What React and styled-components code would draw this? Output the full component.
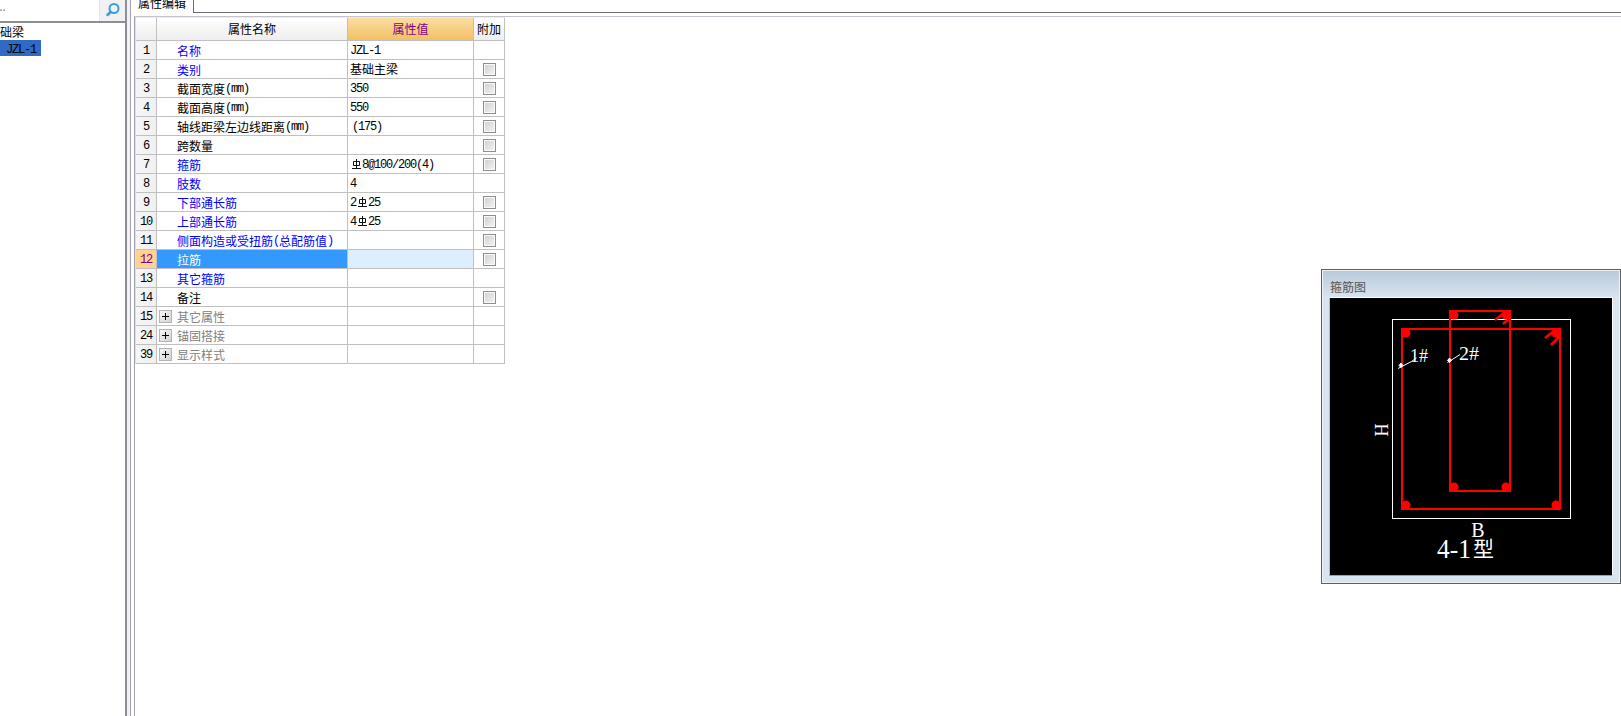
import React from "react";
import styled, { createGlobalStyle } from "styled-components";

const Global = createGlobalStyle`
  html, body { margin: 0; padding: 0; height: 100%; background: #fff; overflow: hidden; }
  #root { height: 100%; }
`;

const CJK = `"Noto Sans CJK SC", "Liberation Sans", sans-serif`;
const LINE = "#c0c0c0";

const Page = styled.div`
  position: relative;
  display: flex;
  width: 1621px;
  height: 716px;
  overflow: hidden;
  background: #fff;
  font-family: ${CJK};
  font-size: 12px;
  color: #000;
`;

const LeftPanel = styled.aside`
  width: 125px;
  flex: none;
  display: flex;
  flex-direction: column;
  overflow: hidden;
`;
const SearchBar = styled.div`
  height: 21px;
  flex: none;
  display: flex;
  background: #f1f1f1;
  border-bottom: 2px solid #8e8e96;
  box-sizing: content-box;
`;
const SearchInput = styled.div`
  width: 100px;
  flex: none;
  box-sizing: border-box;
  padding-left: 0;
  text-indent: -2px;
  background: #fff;
  border-right: 1px solid #e4e4e4;
  color: #8060a0;
  font: 10px/17px "Liberation Mono", monospace;
  letter-spacing: -3px;
  overflow: hidden;
`;
const SearchButton = styled.div`
  flex: 1;
  display: flex;
  padding: 2px 0 0 5px;
`;
const Tree = styled.div`
  display: flex;
  flex-direction: column;
  align-items: flex-start;
`;
const TreeGroup = styled.div`
  height: 17px;
  line-height: 18px;
  font-size: 12px;
`;
const TreeNode = styled.div`
  width: 41px;
  height: 16px;
  line-height: 16px;
  box-sizing: border-box;
  padding-left: 6px;
  background: #316ac5;
  color: #000;
`;

const Splitter = styled.div`
  width: 6px;
  flex: none;
  box-sizing: border-box;
  border-left: 2px solid #8e8e96;
  border-right: 1px solid #a2a2b2;
  background: #f2f2f2;
`;

const Content = styled.main`
  flex: 1;
  display: flex;
  flex-direction: column;
  min-width: 0;
`;
const TabStrip = styled.div`
  height: 13px;
  flex: none;
  display: flex;
`;
const Tab = styled.div`
  width: 63px;
  height: 13px;
  flex: none;
  box-sizing: border-box;
  border-right: 1px solid #6e6e78;
  padding-left: 7px;
  line-height: 12px;
  overflow: hidden;
  white-space: nowrap;
  & > span { display: block; margin-top: -3px; }
`;
const TabRest = styled.div`
  flex: 1;
  border-bottom: 1px solid #6e6e78;
`;
const Sheet = styled.div`
  flex: 1;
  margin: 3px 0 0 3px;
  border-top: 1px solid #c4c4cc;
  border-left: 1px solid #a2a2b2;
`;

const Table = styled.table`
  table-layout: fixed;
  width: 370px;
  border-collapse: separate;
  border-spacing: 0;
  border-top: 1px solid #ececec;
  border-left: 1px solid #e0e0e0;
`;
const HeadCell = styled.th`
  height: 23px;
  box-sizing: border-box;
  padding: 0;
  font-weight: 400;
  font-size: 12px;
  line-height: 20px;
  text-align: center;
  color: ${p => (p.$active ? "#800080" : "#000")};
  border-right: 1px solid ${LINE};
  border-bottom: 1px solid ${LINE};
  background: ${p =>
    p.$active
      ? "linear-gradient(#fbdda2, #f3c063)"
      : "linear-gradient(#ffffff, #eeeeee)"};
`;
const NumCell = styled.td`
  height: 19px;
  box-sizing: border-box;
  padding: 2px 0 0;
  text-align: center;
  font: 12px/16px "Liberation Mono", monospace;
  letter-spacing: -1.2px;
  color: ${p => (p.$selected ? "#800080" : "#000")};
  border-right: 1px solid ${LINE};
  border-bottom: 1px solid ${LINE};
  background: ${p =>
    p.$selected ? "#ffd28f" : "linear-gradient(90deg, #f6f6f6, #f0f0f0)"};
`;
const NameCell = styled.td`
  height: 19px;
  box-sizing: border-box;
  padding: 0;
  border-right: 1px solid ${LINE};
  border-bottom: 1px solid ${LINE};
  background: ${p => (p.$selected ? "#3399ff" : "#fff")};
  color: ${p =>
    p.$selected ? "#fff" : p.$tone === "blue" ? "#0000ff" : p.$tone === "gray" ? "#808080" : "#000"};
`;
const NameInner = styled.div`
  display: flex;
  align-items: center;
  height: 18px;
  padding-left: ${p => (p.$group ? "2px" : "20px")};
  line-height: 19px;
  white-space: nowrap;
  overflow: hidden;
`;
const ValueCell = styled.td`
  height: 19px;
  box-sizing: border-box;
  padding: 0;
  border-right: 1px solid ${LINE};
  border-bottom: 1px solid ${LINE};
  background: ${p => (p.$selected ? "#ddeeff" : "#fff")};
`;
const ValueInner = styled.div`
  display: flex;
  align-items: center;
  height: 18px;
  padding-left: ${p => (p.$indent ? "4px" : "2px")};
  line-height: 18px;
  white-space: nowrap;
`;
const ExtraCell = styled.td`
  height: 19px;
  box-sizing: border-box;
  padding: 0;
  border-right: 1px solid ${LINE};
  border-bottom: 1px solid ${LINE};
`;
const Check = styled.div`
  width: 13px;
  height: 13px;
  box-sizing: border-box;
  margin: 1px 0 0 9px;
  border: 1px solid #8e8e8e;
  background: linear-gradient(135deg, #cfcfcf, #f4f4f4);
  box-shadow: inset 0 0 0 1px #fafafa;
`;
const Expander = styled.div`
  position: relative;
  width: 13px;
  height: 13px;
  flex: none;
  box-sizing: border-box;
  margin-right: 5px;
  border: 1px solid #b4b4b4;
  background: linear-gradient(135deg, #f6f6f6, #d4d4d4);
  &::before, &::after {
    content: "";
    position: absolute;
    background: #000;
  }
  &::before { left: 2px; top: 5px; width: 7px; height: 1px; }
  &::after { left: 5px; top: 2px; width: 1px; height: 7px; }
`;
const Latin = styled.span`
  font: 12px/18px "Liberation Mono", monospace;
  letter-spacing: -1.2px;
  padding-top: 2px;
`;
const RebarIcon = styled.svg`
  width: 12px;
  height: 12px;
  flex: none;
`;

const Popup = styled.section`
  position: absolute;
  left: 1321px;
  top: 269px;
  width: 300px;
  height: 315px;
  box-sizing: border-box;
  display: flex;
  flex-direction: column;
  padding: 0 8px 7px 7px;
  border: 1px solid #5e5e5e;
  box-shadow: inset 0 0 0 1px #eef2f7;
  background: linear-gradient(#b9c9d9 0, #d8e4f0 28px, #d8e4f0 100%);
`;
const PopupTitle = styled.div`
  height: 27px;
  flex: none;
  box-sizing: border-box;
  padding: 7px 0 0 1px;
  line-height: 20px;
  color: #555;
`;
const Canvas = styled.div`
  width: 282px;
  height: 277px;
  flex: none;
  background: #000;
  border-top: 1px solid #fff;
  border-right: 1px solid #fff;
  border-bottom: 1px solid #a0a0a0;
  border-left: 1px solid #b0b8c4;
  & > svg { display: block; }
`;

const Rebar = () => (
  <RebarIcon viewBox="0 0 12 12" aria-hidden="true">
    <path
      d="M3.500 3.500h6v4h-6zM6.500 1v10M2 10.500h9"
      fill="none"
      stroke="#111"
      strokeWidth="1"
    />
  </RebarIcon>
);

const Mixed = ({ text }) =>
  text.split(/(Φ|[\x00-\x7f]+)/).filter(Boolean).map((part, i) => {
    if (part === "Φ") return <Rebar key={i} />;
    if (/^[\x00-\x7f]+$/.test(part)) return <Latin key={i}>{part}</Latin>;
    return <span key={i}>{part}</span>;
  });

const ROWS = [
  { n: 1, name: "名称", tone: "blue", value: "JZL-1" },
  { n: 2, name: "类别", tone: "blue", value: "基础主梁", check: true },
  { n: 3, name: "截面宽度(mm)", value: "350", check: true },
  { n: 4, name: "截面高度(mm)", value: "550", check: true },
  { n: 5, name: "轴线距梁左边线距离(mm)", value: "(175)", indent: true, check: true },
  { n: 6, name: "跨数量", check: true },
  { n: 7, name: "箍筋", tone: "blue", value: "Φ8@100/200(4)", check: true },
  { n: 8, name: "肢数", tone: "blue", value: "4" },
  { n: 9, name: "下部通长筋", tone: "blue", value: "2Φ25", check: true },
  { n: 10, name: "上部通长筋", tone: "blue", value: "4Φ25", check: true },
  { n: 11, name: "侧面构造或受扭筋(总配筋值)", tone: "blue", check: true },
  { n: 12, name: "拉筋", selected: true, check: true },
  { n: 13, name: "其它箍筋", tone: "blue" },
  { n: 14, name: "备注", check: true },
  { n: 15, name: "其它属性", tone: "gray", group: true },
  { n: 24, name: "锚固搭接", tone: "gray", group: true },
  { n: 39, name: "显示样式", tone: "gray", group: true },
];

const RED = "#ff0000";
const DOTS = [
  [1406, 333], [1556, 333], [1406, 505], [1556, 505],
  [1454, 315], [1506, 315], [1454, 487], [1506, 487],
];

const StirrupDrawing = () => (
  <svg width="282" height="277" viewBox="1330 298 282 277">
    <rect x="1392.5" y="319.5" width="178" height="199" fill="none" stroke="#fff" strokeWidth="1" />
    <g fill="none" stroke={RED} strokeWidth="2">
      <rect x="1402" y="329" width="158" height="180" />
      <rect x="1450" y="311" width="60" height="180" />
      <path d="M1545 338l9-7M1551 345l9-9" strokeWidth="2.500" />
      <path d="M1495 320l9-7M1503 324l7-6" strokeWidth="2.500" />
    </g>
    <g fill={RED}>
      {DOTS.map(([cx, cy]) => (
        <circle key={`${cx}-${cy}`} cx={cx} cy={cy} r="4.500" />
      ))}
    </g>
    <g stroke="#fff" strokeWidth="1" fill="#fff">
      <path d="M1398 368.500l13.500-7 5-3.500" fill="none" />
      <path d="M1401 363l2 2.500-2 2-2-2z" />
      <path d="M1447.500 362.500l12.500-8" fill="none" />
      <path d="M1449.500 358l2 2.500-2 2-2-2z" />
    </g>
    <g fill="#fff" fontFamily='"Liberation Serif", "Noto Sans CJK SC", serif'>
      <text x="1410" y="362" fontSize="19" textLength="18" lengthAdjust="spacingAndGlyphs">1#</text>
      <text x="1459" y="360" fontSize="19" textLength="20" lengthAdjust="spacingAndGlyphs">2#</text>
      <text x="1478" y="536.500" fontSize="20" textAnchor="middle">B</text>
      <text transform="translate(1388 430) rotate(-90)" fontSize="18" textAnchor="middle">H</text>
      <text x="1437" y="558" fontSize="28" textLength="34" lengthAdjust="spacingAndGlyphs">4-1</text>
      <text x="1473" y="556" fontSize="21">型</text>
    </g>
  </svg>
);

export default function App() {
  return (
    <Page>
      <Global />
      <LeftPanel>
        <SearchBar>
          <SearchInput>..</SearchInput>
          <SearchButton>
            <svg width="16" height="16" viewBox="0 0 16 16" aria-hidden="true">
              <circle cx="9" cy="6.500" r="4.500" fill="#eaf6ff" stroke="#3d9bdc" strokeWidth="2" />
              <path d="M5.500 10L2.500 13" stroke="#3d9bdc" strokeWidth="2.500" strokeLinecap="round" />
            </svg>
          </SearchButton>
        </SearchBar>
        <Tree>
          <TreeGroup>础梁</TreeGroup>
          <TreeNode><Latin>JZL-1</Latin></TreeNode>
        </Tree>
      </LeftPanel>
      <Splitter />
      <Content>
        <TabStrip>
          <Tab><span>属性编辑</span></Tab>
          <TabRest />
        </TabStrip>
        <Sheet>
          <Table>
            <colgroup>
              <col style={{ width: 21 }} />
              <col style={{ width: 191 }} />
              <col style={{ width: 126 }} />
              <col style={{ width: 31 }} />
            </colgroup>
            <thead>
              <tr>
                <HeadCell />
                <HeadCell>属性名称</HeadCell>
                <HeadCell $active>属性值</HeadCell>
                <HeadCell>附加</HeadCell>
              </tr>
            </thead>
            <tbody>
              {ROWS.map(r => (
                <tr key={r.n}>
                  <NumCell $selected={r.selected}>{r.n}</NumCell>
                  <NameCell $selected={r.selected} $tone={r.tone}>
                    <NameInner $group={r.group}>
                      {r.group && <Expander />}
                      <Mixed text={r.name} />
                    </NameInner>
                  </NameCell>
                  <ValueCell $selected={r.selected}>
                    <ValueInner $indent={r.indent}>
                      {r.value && <Mixed text={r.value} />}
                    </ValueInner>
                  </ValueCell>
                  <ExtraCell>{r.check && <Check />}</ExtraCell>
                </tr>
              ))}
            </tbody>
          </Table>
        </Sheet>
      </Content>
      <Popup>
        <PopupTitle>箍筋图</PopupTitle>
        <Canvas>
          <StirrupDrawing />
        </Canvas>
      </Popup>
    </Page>
  );
}
